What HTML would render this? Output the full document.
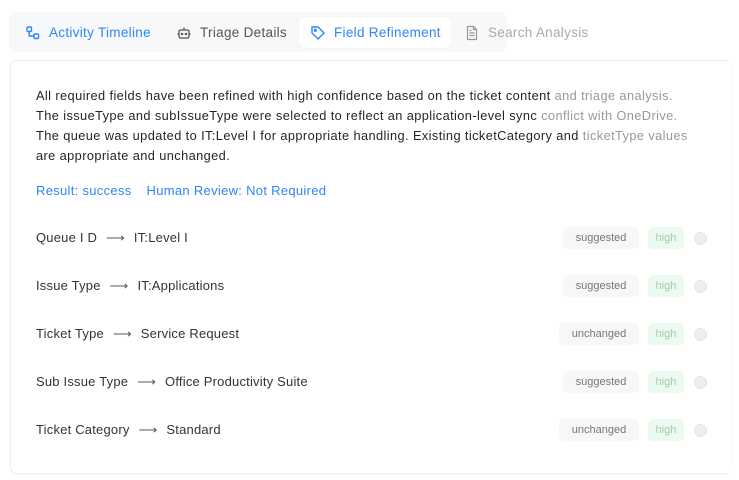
<!DOCTYPE html><html><head><style>
body{margin:0;width:739px;height:480px;background:#fff;font-family:"Liberation Sans",sans-serif;position:relative;overflow:hidden}
.tabs{position:absolute;left:9px;top:12px;width:498px;height:40px;background:#f7f8fa;border-radius:7px}
.tab{position:absolute;top:5px;height:31px;line-height:31px;font-size:13.5px;display:flex;align-items:center;gap:8px;white-space:nowrap;letter-spacing:.3px}
.tab svg{flex-shrink:0}
.act{background:#fff;border-radius:6px;box-shadow:0 0 2px rgba(0,0,0,.05)}
.card{position:absolute;left:10px;top:60px;width:720px;height:412px;border:1px solid #eceef1;border-radius:7px;border-right:none;box-shadow:0 1px 3px rgba(0,0,0,.04)}
p{position:absolute;left:25px;top:25px;margin:0;font-size:12.8px;line-height:20px;color:#1f2328;width:700px;white-space:nowrap;letter-spacing:.4px}
.links{position:absolute;left:25px;top:122px;font-size:13px;color:#2f86f6;letter-spacing:.3px}
.row{position:absolute;left:25px;font-size:13px;color:#333;letter-spacing:.2px}
.row .a{margin:0 9px;color:#555}
.b{position:absolute;height:22px;line-height:22px;font-size:11px;border-radius:5px;text-align:center}
.s{background:#f6f7f8;color:#777}
.h{background:#eafaef;color:#a8c9b0;width:36px}
.c{position:absolute;width:11px;height:11px;border-radius:50%;background:#eceef0;border:1px solid #e2e4e6}
</style></head><body>
<div class="tabs">
<div class="tab" style="left:16px;color:#2f86f6"><svg width="16" height="16" viewBox="0 0 16 16" fill="none" stroke="#2f86f6" stroke-width="1.4"><rect x="2" y="2" width="4.5" height="4.5" rx="1"/><rect x="9" y="9" width="4.5" height="4.5" rx="1"/><path d="M4.2 6.5v4.5h4.8"/></svg>Activity Timeline</div>
<div class="tab" style="left:167px;color:#555"><svg width="16" height="16" viewBox="0 0 16 16" fill="none" stroke="#555" stroke-width="1.3"><rect x="3" y="5" width="10" height="8" rx="1.5"/><path d="M8 5V2.5M1.5 9h1.5M13 9h1.5"/><circle cx="6" cy="9" r=".6"/><circle cx="10" cy="9" r=".6"/></svg>Triage Details</div>
<div class="tab act" style="left:290px;width:152px;color:#2f86f6;padding-left:11px;box-sizing:border-box"><svg width="16" height="16" viewBox="0 0 16 16" fill="none" stroke="#2f86f6" stroke-width="1.4"><path d="M2 2h6l6 6-6 6-6-6z"/><circle cx="5.3" cy="5.3" r="1"/></svg>Field Refinement</div>
<div class="tab" style="left:455px;color:#aaa"><svg width="16" height="16" viewBox="0 0 16 16" fill="none" stroke="#999" stroke-width="1.2"><path d="M3.5 1.5h6l3 3v10h-9z M9.5 1.5v3h3 M5.5 8h5M5.5 10.5h5M5.5 5.5h2"/></svg>Search Analysis</div>
</div>
<div class="card">
<p>All required fields have been refined with high confidence based on the ticket content <span style="color:#999">and triage analysis.</span><br>The issueType and subIssueType were selected to reflect an application-level sync <span style="color:#999">conflict with OneDrive.</span><br>The queue was updated to IT:Level I for appropriate handling. Existing ticketCategory and <span style="color:#999">ticketType values</span><br>are appropriate and unchanged.</p>
<div class="links">Result: success<span style="margin-left:15px">Human Review: Not Required</span></div>
<div class="row" style="top:169px">Queue I D<span class="a">⟶</span>IT:Level I</div>
<div class="row" style="top:217px">Issue Type<span class="a">⟶</span>IT:Applications</div>
<div class="row" style="top:265px">Ticket Type<span class="a">⟶</span>Service Request</div>
<div class="row" style="top:313px">Sub Issue Type<span class="a">⟶</span>Office Productivity Suite</div>
<div class="row" style="top:361px">Ticket Category<span class="a">⟶</span>Standard</div>
<div class="b s" style="left:552px;top:166px;width:76px">suggested</div><div class="b h" style="left:637px;top:166px">high</div><div class="c" style="left:683px;top:171px"></div>
<div class="b s" style="left:552px;top:214px;width:76px">suggested</div><div class="b h" style="left:637px;top:214px">high</div><div class="c" style="left:683px;top:219px"></div>
<div class="b s" style="left:548px;top:262px;width:80px">unchanged</div><div class="b h" style="left:637px;top:262px">high</div><div class="c" style="left:683px;top:267px"></div>
<div class="b s" style="left:552px;top:310px;width:76px">suggested</div><div class="b h" style="left:637px;top:310px">high</div><div class="c" style="left:683px;top:315px"></div>
<div class="b s" style="left:548px;top:358px;width:80px">unchanged</div><div class="b h" style="left:637px;top:358px">high</div><div class="c" style="left:683px;top:363px"></div>
</div>
</body></html>
